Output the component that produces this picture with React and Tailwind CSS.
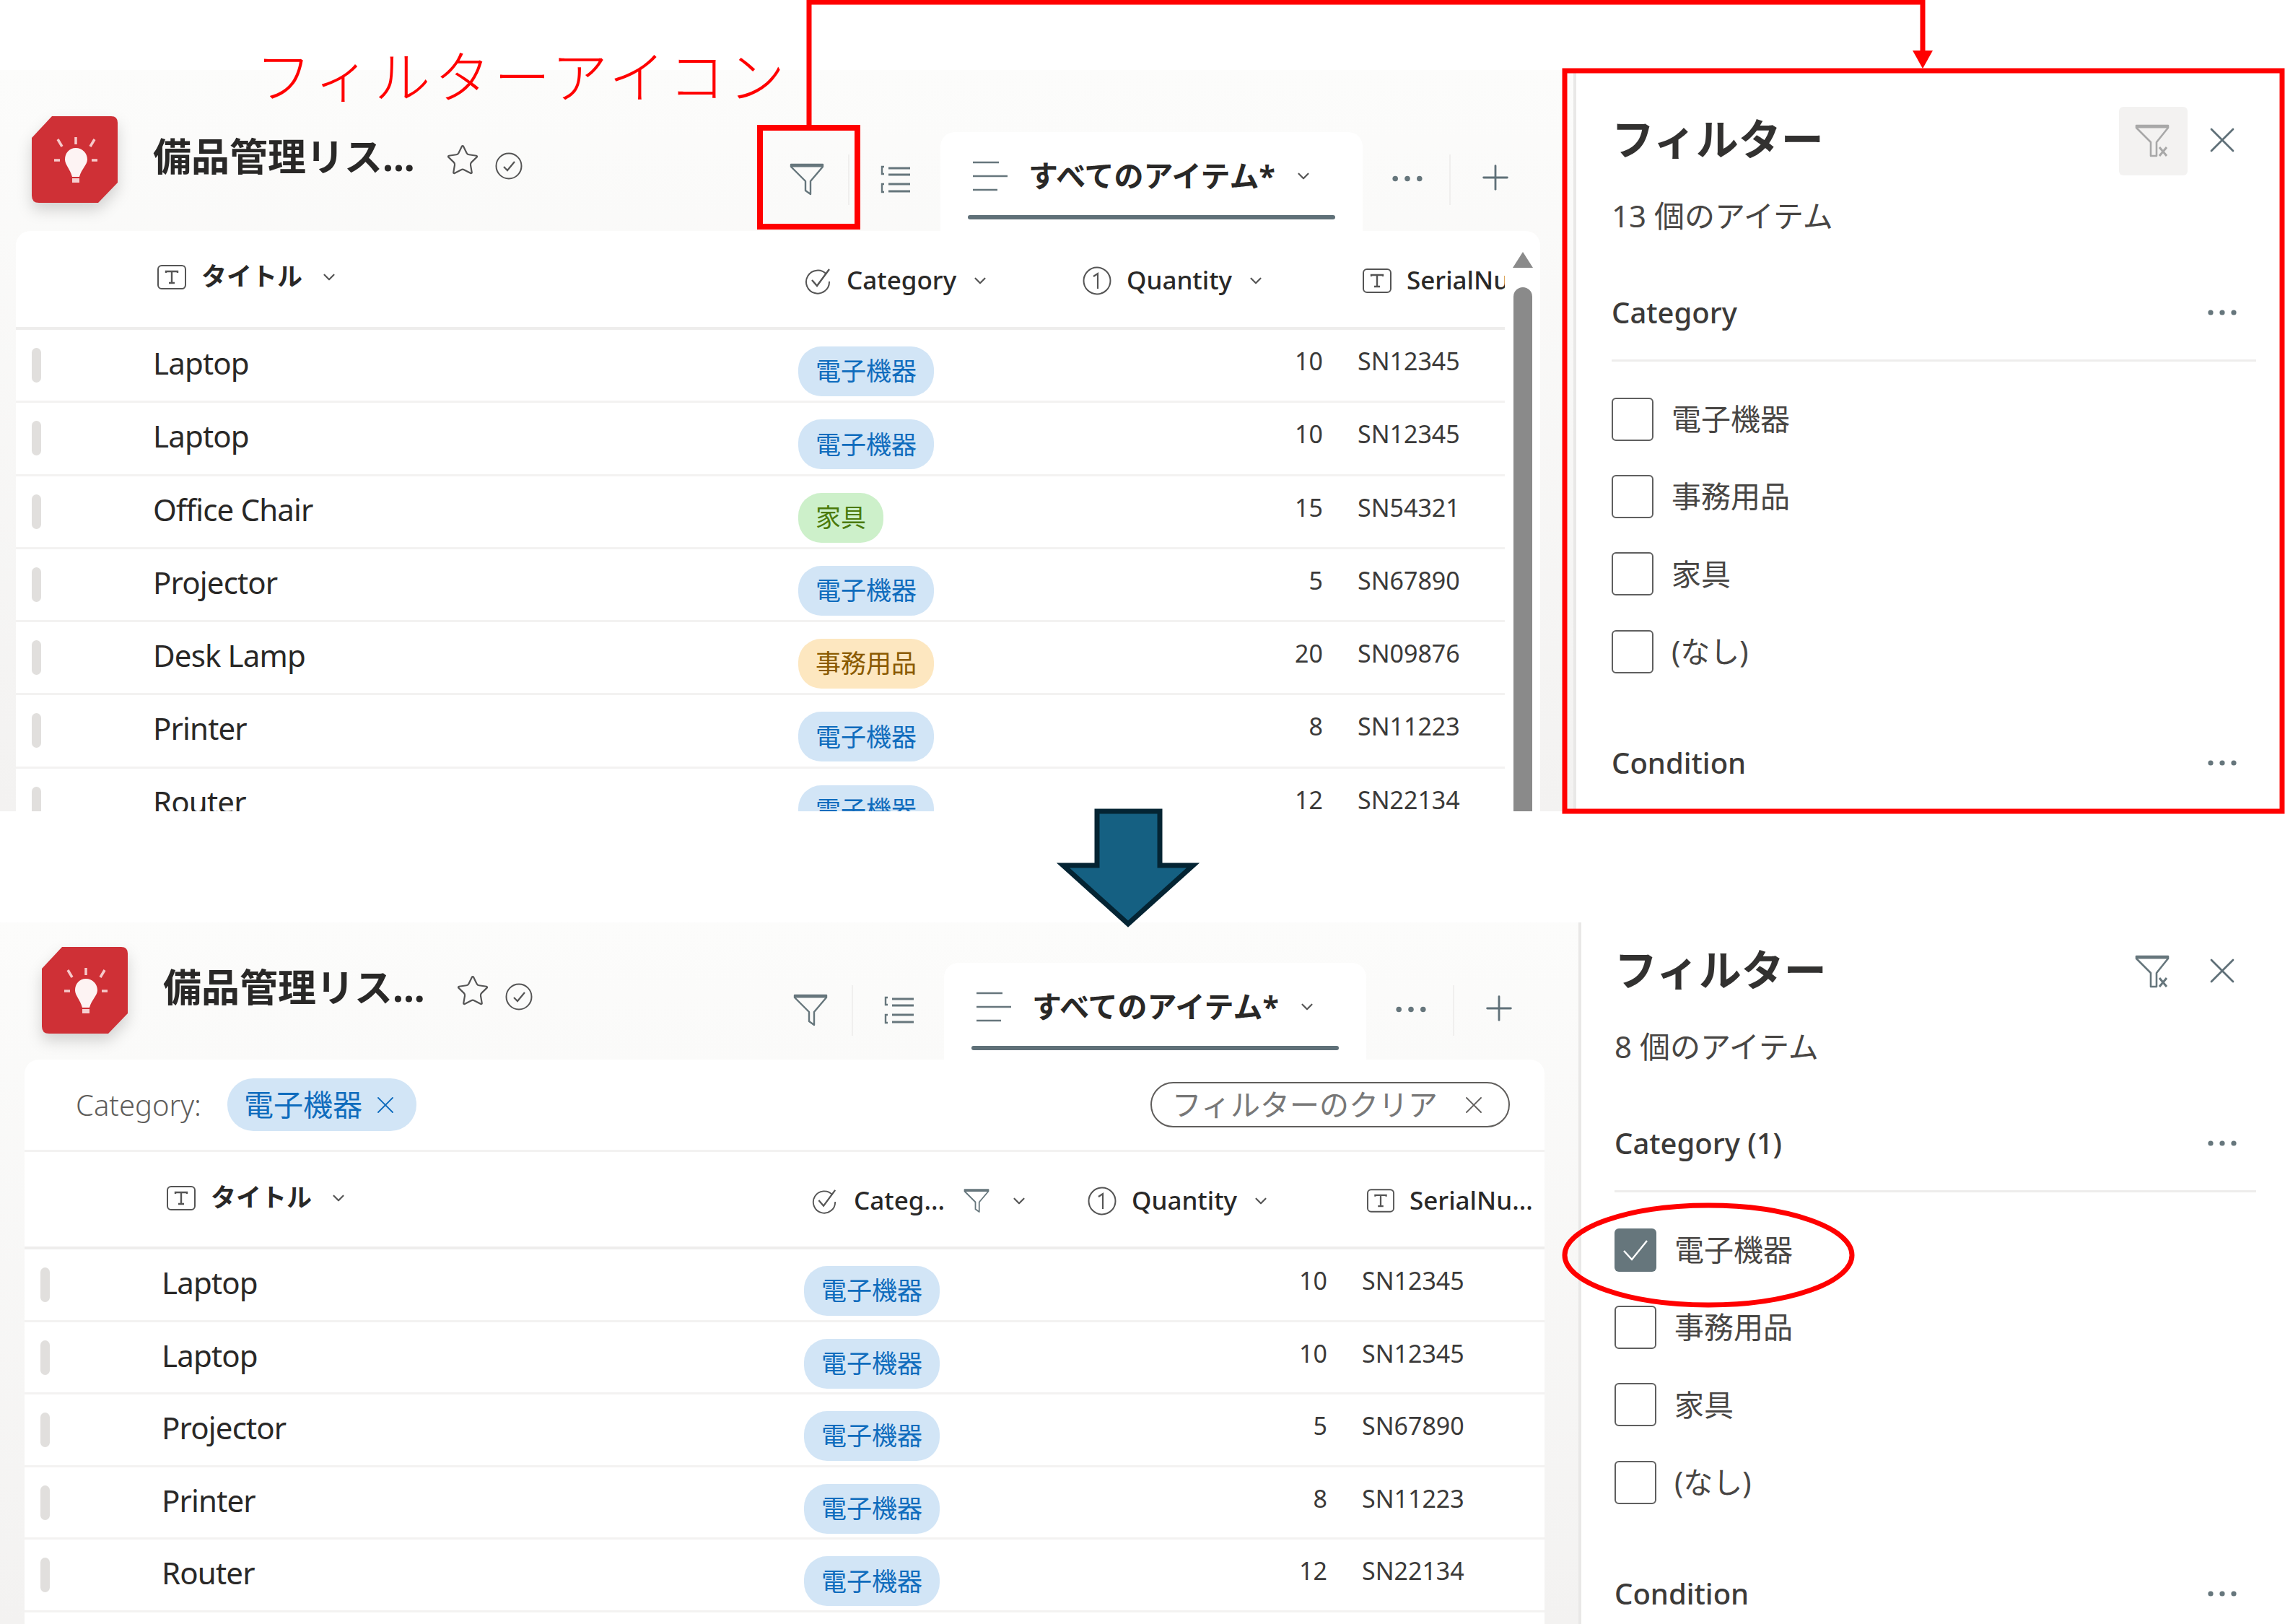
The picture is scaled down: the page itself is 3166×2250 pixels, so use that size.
import React from 'react';
import { ChevronDown, Plus, Star, X } from 'lucide-react';

const GRAY = '#66767c';

const topRows = [
  ['Laptop', 'e', '10', 'SN12345'],
  ['Laptop', 'e', '10', 'SN12345'],
  ['Office Chair', 'f', '15', 'SN54321'],
  ['Projector', 'e', '5', 'SN67890'],
  ['Desk Lamp', 'o', '20', 'SN09876'],
  ['Printer', 'e', '8', 'SN11223'],
  ['Router', 'e', '12', 'SN22134'],
];

const bottomRows = [
  ['Laptop', 'e', '10', 'SN12345'],
  ['Laptop', 'e', '10', 'SN12345'],
  ['Projector', 'e', '5', 'SN67890'],
  ['Printer', 'e', '8', 'SN11223'],
  ['Router', 'e', '12', 'SN22134'],
];

const tags = {
  e: { label: '電子機器', cls: 'bg-[#d2e5f6] text-[#0f6cbd]' },
  f: { label: '家具', cls: 'bg-[#cdf0ca] text-[#4b7a0a]' },
  o: { label: '事務用品', cls: 'bg-[#fde7c0] text-[#8a5a00]' },
};

const FilterIcon = ({ className, color = GRAY }) => (
  <svg viewBox="0 0 48 46" className={className} fill="none" stroke={color} strokeWidth="2.4" strokeLinejoin="round">
    <path d="M2 2h44v3L29 25v18l-7-5V25L2 5z" />
    <path d="M2 3.5h44" strokeWidth="4" />
  </svg>
);

const FilterClearIcon = ({ className, color = GRAY }) => (
  <svg viewBox="0 0 52 46" className={className} fill="none" stroke={color} strokeWidth="2.6" strokeLinejoin="round">
    <path d="M2 2h44v3L30 25v19h-8V25L2 5z" />
    <path d="M2 3.5h44" strokeWidth="4" />
    <path d="M34 32l10 12M44 32L34 44" strokeWidth="3" />
  </svg>
);

const ListIcon = ({ className }) => (
  <svg viewBox="0 0 44 42" className={className} fill="none" stroke={GRAY} strokeWidth="2.4">
    <path d="M6 3H3v10h3M6 27H3v11h3" />
    <path d="M12 5h30M12 14h30M12 27h30M12 37h30" strokeWidth="3" />
  </svg>
);

const TabIcon = ({ className }) => (
  <svg viewBox="0 0 48 42" className={className} fill="none" stroke={GRAY} strokeWidth="2.6">
    <path d="M0 2h36M0 21h48M0 40h34" />
  </svg>
);

const TextFieldIcon = ({ className }) => (
  <svg viewBox="0 0 40 34" className={className} fill="none" stroke="#555" strokeWidth="2">
    <rect x="1" y="1" width="38" height="32" rx="5" />
    <path d="M12 11V9h16v2M20 9v15M16 25h8" strokeWidth="2.4" />
  </svg>
);

const ChoiceIcon = ({ className }) => (
  <svg viewBox="0 0 38 38" className={className} fill="none" stroke="#555" strokeWidth="2">
    <path d="M31 10a16 16 0 1 0 4 10" />
    <path d="M11 18l7 8L35 3" strokeWidth="2.4" />
  </svg>
);

const NumberIcon = ({ className }) => (
  <svg viewBox="0 0 40 40" className={className} fill="none" stroke="#555" strokeWidth="2">
    <circle cx="20" cy="20" r="18.5" />
    <path d="M15 14l6-4v21" strokeWidth="2.2" />
  </svg>
);

const CheckCircle = ({ className }) => (
  <svg viewBox="0 0 38 38" className={className} fill="none" stroke="#555" strokeWidth="2">
    <circle cx="19" cy="19" r="17.5" />
    <path d="M12 20l5 5 10-12" strokeWidth="2.2" />
  </svg>
);

const Dots = ({ className }) => (
  <svg viewBox="0 0 40 8" className={className} fill={GRAY}>
    <circle cx="4" cy="4" r="3.6" />
    <circle cx="20" cy="4" r="3.6" />
    <circle cx="36" cy="4" r="3.6" />
  </svg>
);

const Logo = () => (
  <svg viewBox="0 0 119 120" className="w-[119px] h-[120px] shrink-0 drop-shadow-[0_10px_10px_rgba(0,0,0,0.16)]">
    <path d="M28 0H110Q119 0 119 9V92L92 120H10Q0 120 0 110V30Z" fill="#cf3036" />
    <path d="M61 44c-9 0-15 7-15 16 0 7 7 13 10 24h10c3-11 11-17 11-24 0-9-7-16-16-16z" fill="#fdf3f3" />
    <rect x="56" y="86" width="10" height="6" fill="#f6d0d1" />
    <path d="M61 29v10M36 32l6 10M87 32l-6 10M31 61h8M83 61h8" stroke="#f6c9ca" strokeWidth="3.5" />
  </svg>
);

const HeaderCell = ({ icon, label, w, labelCls = 'font-medium text-[35px]', chevCls = 'ml-[20px]' }) => (
  <div className={`flex items-center shrink-0 whitespace-nowrap ${w}`}>
    {icon}
    <span className={`ml-[21px] text-[#292827] ${labelCls}`}>{label}</span>
    <ChevronDown className={`${chevCls} w-[26px] h-[26px] text-[#555]`} strokeWidth={2} />
  </div>
);

const Row = ({ row, cols }) => {
  const tag = tags[row[1]];
  return (
    <div className={`grid border-b-[3px] border-[#f3f2f1] ${cols}`}>
      <div className="pl-[22px] pt-[25px]">
        <div className="w-[13px] h-[48px] rounded-full bg-[#e1dfdd]" />
      </div>
      <div className="pt-[18px] text-[42px] leading-[56px] text-[#292827] tracking-[-0.02em]">{row[0]}</div>
      <div className="pt-[23px]">
        <span className={`inline-flex items-center h-[69px] px-[24px] rounded-[32px] text-[35px] ${tag.cls}`}>{tag.label}</span>
      </div>
      <div className="pt-[20px] text-right text-[34px] leading-[46px] text-[#3b3a39]">{row[2]}</div>
      <div className="pt-[20px] pl-[48px] text-[34px] leading-[46px] text-[#3b3a39]">{row[3]}</div>
    </div>
  );
};

const AppHeader = ({ className }) => (
  <div className={`flex items-start shrink-0 ${className}`}>
    <Logo />
    <div className="ml-[49px] mt-[20px] text-[53px] leading-[72px] font-bold text-[#292827] whitespace-nowrap">備品管理リス...</div>
    <Star className="ml-[42px] mt-[37px] w-[48px] h-[48px] text-[#555]" strokeWidth={1.1} />
    <CheckCircle className="ml-[21px] mt-[50px] w-[38px] h-[38px]" />
    <div className="flex-1" />
    <FilterIcon className="mt-[65px] w-[48px] h-[46px]" />
    <div className="ml-[33px] mt-[53px] h-[70px] border-l-2 border-[#f0efee]" />
    <ListIcon className="ml-[42px] mt-[67px] w-[44px] h-[42px]" />
    <div className="ml-[40px] mt-[22px] flex flex-col w-[585px] h-[137px] rounded-t-[20px] bg-white px-[38px]">
      <div className="flex items-center h-[115px] pt-[6px]">
        <TabIcon className="ml-[7px] w-[48px] h-[42px]" />
        <span className="ml-[29px] text-[41px] font-bold text-[#292827] whitespace-nowrap">すべてのアイテム*</span>
        <ChevronDown className="ml-[26px] w-[26px] h-[26px] text-[#555]" strokeWidth={2} />
      </div>
      <div className="h-[6px] rounded-full bg-[#5f7078]" />
    </div>
    <Dots className="ml-[41px] mt-[82px] w-[42px] h-[9px]" />
    <div className="ml-[37px] mt-[53px] h-[70px] border-l-2 border-[#f0efee]" />
    <Plus className="ml-[34px] mt-[57px] w-[56px] h-[56px] text-[#5f7078]" strokeWidth={1.2} />
  </div>
);

const Panel = ({ className, count, category, checked, clearActive }) => (
  <div className={`flex flex-col flex-1 min-w-0 h-full bg-white border-l-[4px] border-[#e9e8e7] ${className}`}>
    <div className="flex items-center h-[94px]">
      <span className="text-[59px] font-bold text-[#323130]">フィルター</span>
      <div className="flex-1" />
      <div className={`mt-[6px] flex items-center justify-center w-[95px] h-[95px] rounded-[6px] ${clearActive ? '' : 'bg-[#f3f2f1]'}`}>
        <FilterClearIcon className="w-[52px] h-[46px]" color={clearActive ? GRAY : '#a8a8a8'} />
      </div>
      <X className="mt-[4px] ml-[18px] mr-[17px] w-[60px] h-[60px] text-[#5f7078]" strokeWidth={1.1} />
    </div>
    <div className="flex items-center h-[118px] mb-[10px] text-[42px] text-[#484644]">{count}</div>
    <div className="flex items-center h-[134px] border-b-[3px] border-[#eeedec]">
      <span className="text-[40px] font-medium text-[#3b3a39]">{category}</span>
      <div className="flex-1" />
      <Dots className="mr-[27px] w-[40px] h-[8px]" />
    </div>
    <div className="mt-[26px] flex flex-col">
      {['電子機器', '事務用品', '家具', '(なし)'].map((label, i) => (
        <div key={label} className="flex items-center h-[107.4px]">
          {checked && i === 0 ? (
            <div className="flex items-center justify-center w-[58px] h-[60px] rounded-[6px] bg-[#66767c]">
              <svg viewBox="0 0 36 30" className="w-[36px] h-[30px]" fill="none" stroke="#fff" strokeWidth="2.4">
                <path d="M2 16l11 12L34 2" />
              </svg>
            </div>
          ) : (
            <div className="w-[58px] h-[60px] rounded-[6px] border-2 border-[#5f5f5f]" />
          )}
          <span className="ml-[25px] text-[41px] text-[#484644]">{label}</span>
        </div>
      ))}
    </div>
    <div className="flex items-center h-[60px] mt-[70px]">
      <span className="text-[40px] font-medium text-[#3b3a39]">Condition</span>
      <div className="flex-1" />
      <Dots className="mr-[27px] w-[40px] h-[8px]" />
    </div>
  </div>
);

const Annotations = () => (
  <svg viewBox="0 0 3166 2250" className="absolute inset-0 w-[3166px] h-[2250px] pointer-events-none" fill="none">
    <rect x="1053" y="177" width="135" height="137" stroke="#ff0000" strokeWidth="8" />
    <path d="M1121 177V3H2664V74" stroke="#ff0000" strokeWidth="7" />
    <path d="M2650 70h28l-14 25z" fill="#ff0000" />
    <rect x="2168" y="98" width="994" height="1026" stroke="#ff0000" strokeWidth="7" />
    <path d="M1520 1124h87v75h46l-90 81-90-81h47z" fill="#156082" stroke="#042433" strokeWidth="7" />
    <ellipse cx="2367" cy="1739" rx="199" ry="69" stroke="#ff0000" strokeWidth="7" />
  </svg>
);

export default function App() {
  return (
    <div className="relative w-[3166px] h-[2250px] overflow-hidden bg-white font-['Noto_Sans','Noto_Sans_CJK_JP',sans-serif]">
      <div className="h-[97px]" />

      <section className="flex h-[1027px] overflow-hidden">
        <div className="flex flex-col w-[2180px] shrink-0 pl-[22px] pr-[46px] bg-gradient-to-b from-[#fcfcfb] to-[#f3f2f1]">
          <AppHeader className="h-[223px] pt-[64px] pl-[22px] pr-[34px]" />
          <div className="relative flex-1 min-h-0 overflow-hidden rounded-t-[20px] bg-white">
            <div className="mr-[49px]">
              <div className="flex items-center h-[137px] pt-[4px] pl-[196px] border-b-4 border-[#eeedec] overflow-hidden">
                <div className="-mt-[10px] shrink-0 w-[896px]">
                  <HeaderCell icon={<TextFieldIcon className="w-[40px] h-[34px]" />} label="タイトル" w="" labelCls="font-bold text-[35px]" chevCls="ml-[24px]" />
                </div>
                <HeaderCell icon={<ChoiceIcon className="w-[38px] h-[38px]" />} label="Category" w="w-[386px]" />
                <HeaderCell icon={<NumberIcon className="w-[40px] h-[40px]" />} label="Quantity" w="w-[388px]" />
                <div className="flex items-center shrink-0 whitespace-nowrap">
                  <TextFieldIcon className="w-[40px] h-[34px]" />
                  <span className="ml-[21px] text-[35px] font-medium text-[#292827]">SerialNu</span>
                </div>
              </div>
              {topRows.map((r, i) => (
                <Row key={i} row={r} cols="h-[101.3px] grid-cols-[190px_894px_220px_507px_1fr]" />
              ))}
            </div>
            {/* scroll bar */}
            <div className="absolute top-[29px] right-[9px] bottom-0 flex flex-col items-center w-[30px]">
              <div className="w-0 h-0 border-x-[14px] border-x-transparent border-b-[22px] border-b-[#8a8a8a]" />
              <div className="mt-[27px] flex-1 w-[26px] rounded-t-full bg-[#8a8a8a]" />
            </div>
          </div>
        </div>
        <Panel className="pl-[49px] pt-[48px] pr-[40px]" count="13 個のアイテム" category="Category" />
      </section>

      <div className="h-[154px]" />

      <section className="flex h-[972px] overflow-hidden">
        <div className="flex flex-col w-[2187px] shrink-0 pl-[34px] pr-[47px] bg-gradient-to-b from-[#fcfcfb] to-[#f3f2f1]">
          <AppHeader className="h-[190px] pt-[34px] pl-[24px] pr-[35px]" />
          <div className="flex-1 min-h-0 overflow-hidden rounded-t-[20px] bg-white">
            <div className="flex items-center h-[128px] pl-[71px] pr-[48px] border-b-[3px] border-[#f3f2f1]">
              <span className="text-[40px] font-light text-[#605e5c]">Category:</span>
              <div className="ml-[36px] flex items-center h-[73px] px-[23px] rounded-[36px] bg-[#d2e5f6] text-[41px] text-[#0f6cbd]">
                電子機器
                <X className="ml-[12px] w-[40px] h-[40px]" strokeWidth={1.1} />
              </div>
              <div className="flex-1" />
              <div className="flex items-center h-[63px] pl-[28px] pr-[28px] rounded-full border-2 border-[#605e5c] text-[41px] text-[#777] whitespace-nowrap">
                フィルターのクリア
                <X className="ml-[30px] w-[40px] h-[40px] text-[#605e5c]" strokeWidth={1.1} />
              </div>
            </div>
            <div className="flex items-center h-[135px] pt-[4px] pl-[197px] border-b-4 border-[#eeedec] overflow-hidden">
              <div className="-mt-[8px] shrink-0 w-[893px]">
                <HeaderCell icon={<TextFieldIcon className="w-[40px] h-[34px]" />} label="タイトル" w="" labelCls="font-bold text-[35px]" chevCls="ml-[24px]" />
              </div>
              <div className="flex items-center shrink-0 w-[383px] whitespace-nowrap">
                <ChoiceIcon className="w-[36px] h-[38px]" />
                <span className="ml-[23px] text-[35px] font-medium text-[#292827]">Categ...</span>
                <FilterIcon className="ml-[26px] w-[36px] h-[36px]" />
                <ChevronDown className="ml-[28px] w-[26px] h-[26px] text-[#555]" strokeWidth={2} />
              </div>
              <HeaderCell icon={<NumberIcon className="w-[40px] h-[40px]" />} label="Quantity" w="w-[387px]" />
              <div className="flex items-center shrink-0 whitespace-nowrap">
                <TextFieldIcon className="w-[38px] h-[33px]" />
                <span className="ml-[21px] text-[35px] font-medium text-[#292827]">SerialNu...</span>
              </div>
            </div>
            {bottomRows.map((r, i) => (
              <Row key={i} row={r} cols="h-[100.6px] grid-cols-[190px_890px_220px_505px_1fr]" />
            ))}
          </div>
        </div>
        <Panel className="pl-[46px] pt-[18px] pr-[40px]" count="8 個のアイテム" category="Category (1)" checked clearActive />
      </section>

      <div className="absolute top-[56px] left-[354px] text-[78px] leading-[100px] tracking-[5px] text-[#ff0000] font-light whitespace-nowrap">フィルターアイコン</div>
      <Annotations />
    </div>
  );
}
